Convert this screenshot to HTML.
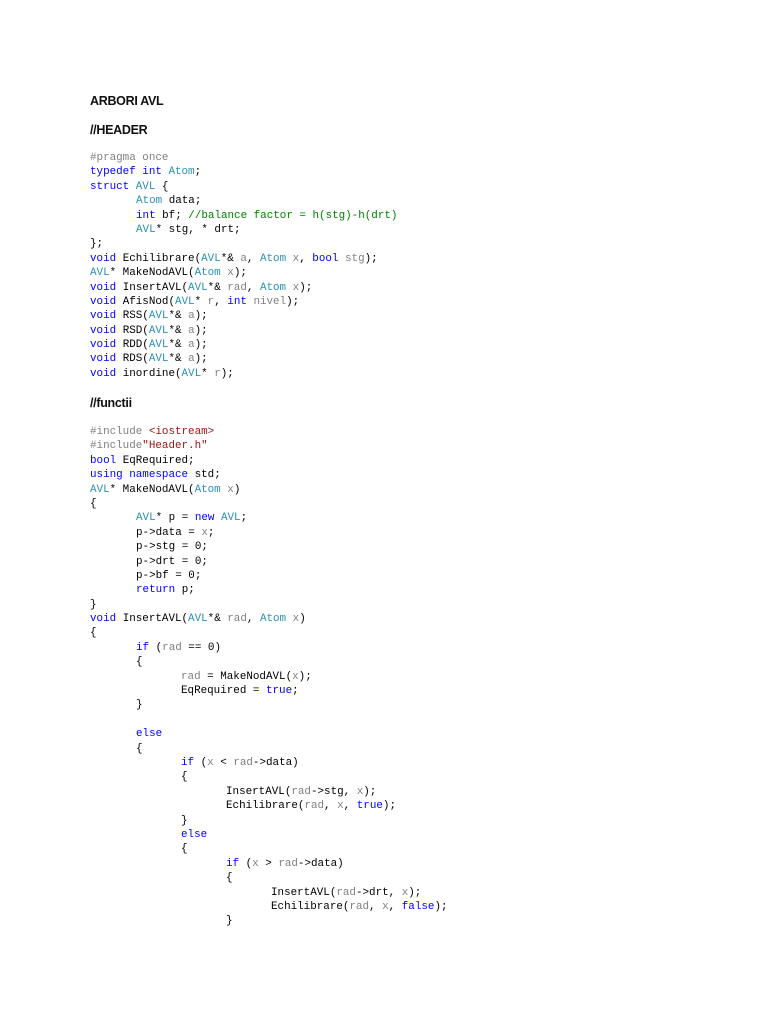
<!DOCTYPE html>
<html><head><meta charset="utf-8"><style>
html,body{margin:0;padding:0;background:#fff;width:768px;height:1024px;overflow:hidden}
.h{position:absolute;left:90px;font-family:"Liberation Sans",sans-serif;font-weight:bold;font-size:12.5px;color:#111;letter-spacing:-0.3px}
.c{position:absolute;left:90px;font-family:"Liberation Mono",monospace;font-size:10.9px;line-height:14.4px;color:#000}
.c div{height:14.4px;white-space:pre}
.k{color:#0000ff}.t{color:#2b91af}.g{color:#008000}.s{color:#a31515}.p{color:#808080}
.i1{padding-left:46px}.i2{padding-left:91px}.i3{padding-left:136px}.i4{padding-left:181px}
</style></head><body>
<div class="h" style="top:94px">ARBORI AVL</div>
<div class="h" style="top:123px">//HEADER</div>
<div class="c" style="top:151px"><div><span class="p">#pragma once</span></div><div><span class="k">typedef</span> <span class="k">int</span> <span class="t">Atom</span>;</div><div><span class="k">struct</span> <span class="t">AVL</span> {</div><div class="i1"><span class="t">Atom</span> data;</div><div class="i1"><span class="k">int</span> bf; <span class="g">//balance factor = h(stg)-h(drt)</span></div><div class="i1"><span class="t">AVL</span>* stg, * drt;</div><div>};</div><div><span class="k">void</span> Echilibrare(<span class="t">AVL</span>*&amp; <span class="p">a</span>, <span class="t">Atom</span> <span class="p">x</span>, <span class="k">bool</span> <span class="p">stg</span>);</div><div><span class="t">AVL</span>* MakeNodAVL(<span class="t">Atom</span> <span class="p">x</span>);</div><div><span class="k">void</span> InsertAVL(<span class="t">AVL</span>*&amp; <span class="p">rad</span>, <span class="t">Atom</span> <span class="p">x</span>);</div><div><span class="k">void</span> AfisNod(<span class="t">AVL</span>* <span class="p">r</span>, <span class="k">int</span> <span class="p">nivel</span>);</div><div><span class="k">void</span> RSS(<span class="t">AVL</span>*&amp; <span class="p">a</span>);</div><div><span class="k">void</span> RSD(<span class="t">AVL</span>*&amp; <span class="p">a</span>);</div><div><span class="k">void</span> RDD(<span class="t">AVL</span>*&amp; <span class="p">a</span>);</div><div><span class="k">void</span> RDS(<span class="t">AVL</span>*&amp; <span class="p">a</span>);</div><div><span class="k">void</span> inordine(<span class="t">AVL</span>* <span class="p">r</span>);</div></div>
<div class="h" style="top:396px">//functii</div>
<div class="c" style="top:425px"><div><span class="p">#include</span> <span class="s">&lt;iostream&gt;</span></div><div><span class="p">#include</span><span class="s">"Header.h"</span></div><div><span class="k">bool</span> EqRequired;</div><div><span class="k">using</span> <span class="k">namespace</span> std;</div><div><span class="t">AVL</span>* MakeNodAVL(<span class="t">Atom</span> <span class="p">x</span>)</div><div>{</div><div class="i1"><span class="t">AVL</span>* p = <span class="k">new</span> <span class="t">AVL</span>;</div><div class="i1">p-&gt;data = <span class="p">x</span>;</div><div class="i1">p-&gt;stg = 0;</div><div class="i1">p-&gt;drt = 0;</div><div class="i1">p-&gt;bf = 0;</div><div class="i1"><span class="k">return</span> p;</div><div>}</div><div><span class="k">void</span> InsertAVL(<span class="t">AVL</span>*&amp; <span class="p">rad</span>, <span class="t">Atom</span> <span class="p">x</span>)</div><div>{</div><div class="i1"><span class="k">if</span> (<span class="p">rad</span> == 0)</div><div class="i1">{</div><div class="i2"><span class="p">rad</span> = MakeNodAVL(<span class="p">x</span>);</div><div class="i2">EqRequired = <span class="k">true</span>;</div><div class="i1">}</div><div></div><div class="i1"><span class="k">else</span></div><div class="i1">{</div><div class="i2"><span class="k">if</span> (<span class="p">x</span> &lt; <span class="p">rad</span>-&gt;data)</div><div class="i2">{</div><div class="i3">InsertAVL(<span class="p">rad</span>-&gt;stg, <span class="p">x</span>);</div><div class="i3">Echilibrare(<span class="p">rad</span>, <span class="p">x</span>, <span class="k">true</span>);</div><div class="i2">}</div><div class="i2"><span class="k">else</span></div><div class="i2">{</div><div class="i3"><span class="k">if</span> (<span class="p">x</span> &gt; <span class="p">rad</span>-&gt;data)</div><div class="i3">{</div><div class="i4">InsertAVL(<span class="p">rad</span>-&gt;drt, <span class="p">x</span>);</div><div class="i4">Echilibrare(<span class="p">rad</span>, <span class="p">x</span>, <span class="k">false</span>);</div><div class="i3">}</div></div>
</body></html>
